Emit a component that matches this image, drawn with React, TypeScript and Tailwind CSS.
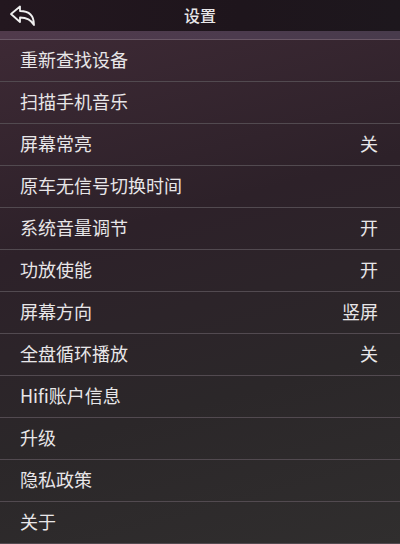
type Row = { label: string; value?: string };

const rows: Row[] = [
  { label: "重新查找设备" },
  { label: "扫描手机音乐" },
  { label: "屏幕常亮", value: "关" },
  { label: "原车无信号切换时间" },
  { label: "系统音量调节", value: "开" },
  { label: "功放使能", value: "开" },
  { label: "屏幕方向", value: "竖屏" },
  { label: "全盘循环播放", value: "关" },
  { label: "Hifi账户信息" },
  { label: "升级" },
  { label: "隐私政策" },
  { label: "关于" },
];

const BackIcon = () => (
  <svg width="28" height="24" viewBox="0 0 28 24" fill="none">
    <path
      d="M2 10 L11 2.5 L11 7 C19 7 25 11 25 21 C22 15.5 17.5 13.5 11 13.5 L11 18 Z"
      stroke="#f0f0f0"
      strokeWidth="1.8"
      strokeLinejoin="round"
    />
  </svg>
);

export default function App() {
  return (
    <div
      className="flex h-[544px] w-[400px] flex-col overflow-hidden bg-[linear-gradient(165deg,#402b37_0%,#2d2129_40%,#2b2729_70%,#302e2e_100%)] text-[#e8e6e8]"
      style={{ fontFamily: '"Noto Sans CJK SC", "Noto Sans", sans-serif' }}
    >
      <header className="relative flex h-[31px] items-center justify-center bg-[linear-gradient(90deg,#23171f_0%,#1e151c_60%,#1d171d_100%)]">
        <div className="absolute left-[9px] top-[4px]">
          <BackIcon />
        </div>
        <span className="pb-[2px] text-[16px] font-medium leading-none">设置</span>
      </header>
      <div className="h-[9px] border-b border-[#6a5866] bg-[linear-gradient(90deg,#503a4b_0%,#4c3b4e_60%,#483b4c_100%)]" />
      <ul className="flex flex-col">
        {rows.map((row) => (
          <li
            key={row.label}
            className="flex h-[42px] items-center justify-between border-b border-[#524a50] pb-[3px] pl-[20px] pr-[22px]"
          >
            <span className="text-[18px] leading-none">{row.label}</span>
            {row.value && <span className="text-[18px] leading-none">{row.value}</span>}
          </li>
        ))}
      </ul>
    </div>
  );
}
